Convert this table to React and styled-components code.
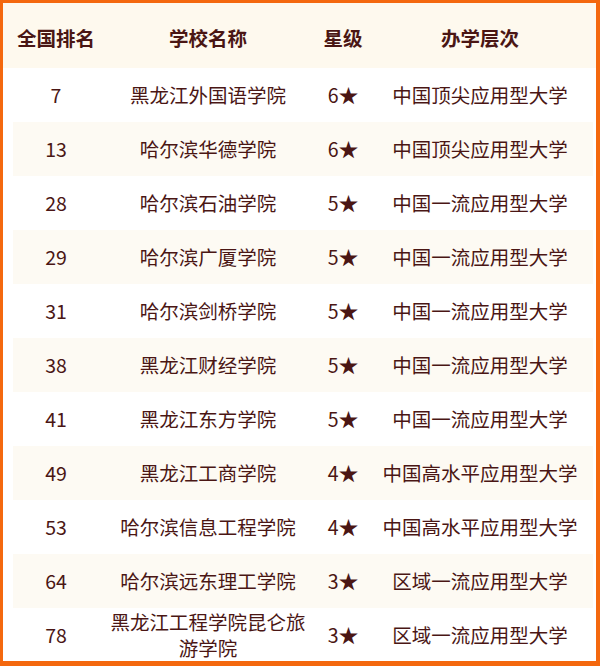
import styled, { createGlobalStyle } from 'styled-components';

const GlobalStyle = createGlobalStyle`
  html, body {
    margin: 0;
    padding: 0;
    background: #ffffff;
  }
`

const Frame = styled.div`
  box-sizing: border-box;
  width: 600px;
  height: 666px;
  border-style: solid;
  border-color: #f4680e;
  border-width: 3px 4px 5px 3px;
  background: #ffffff;
  font-family: "Noto Sans CJK SC", "Noto Sans", sans-serif;
  color: #4a1614;
  overflow: hidden;
`

const Grid = styled.div`
  display: grid;
  grid-template-columns: 106px 198px 72px 202px;
  align-items: center;
  justify-items: center;
  text-align: center;
`

const HeaderRow = styled(Grid)`
  height: 65px;
  background: #fef9ee;
  font-weight: 700;
  font-size: 19.5px;
  padding-top: 3px;
  box-sizing: border-box;
`

const Row = styled(Grid)`
  min-height: ${p => p.$last ? 53 : 54}px;
  font-size: 19.5px;
  line-height: 26px;
  background: ${p => p.$striped
    ? 'linear-gradient(to right, transparent 10px, #fdfaf3 10px, #fdfaf3 calc(100% - 3px), transparent calc(100% - 3px))'
    : 'transparent'};
`

const Cell = styled.div`
  width: 100%;
`

const rows = [
  [7, '黑龙江外国语学院', 6, '中国顶尖应用型大学'],
  [13, '哈尔滨华德学院', 6, '中国顶尖应用型大学'],
  [28, '哈尔滨石油学院', 5, '中国一流应用型大学'],
  [29, '哈尔滨广厦学院', 5, '中国一流应用型大学'],
  [31, '哈尔滨剑桥学院', 5, '中国一流应用型大学'],
  [38, '黑龙江财经学院', 5, '中国一流应用型大学'],
  [41, '黑龙江东方学院', 5, '中国一流应用型大学'],
  [49, '黑龙江工商学院', 4, '中国高水平应用型大学'],
  [53, '哈尔滨信息工程学院', 4, '中国高水平应用型大学'],
  [64, '哈尔滨远东理工学院', 3, '区域一流应用型大学'],
  [78, '黑龙江工程学院昆仑旅游学院', 3, '区域一流应用型大学'],
]

export default function App() {
  return (
    <>
      <GlobalStyle />
      <Frame>
        <HeaderRow>
          <Cell>全国排名</Cell>
          <Cell>学校名称</Cell>
          <Cell>星级</Cell>
          <Cell>办学层次</Cell>
        </HeaderRow>
        {rows.map((r, i) => (
          <Row key={r[0]} $striped={i % 2 === 1} $last={i === rows.length - 1}>
            <Cell>{r[0]}</Cell>
            <Cell>{r[1]}</Cell>
            <Cell>{r[2]}★</Cell>
            <Cell>{r[3]}</Cell>
          </Row>
        ))}
      </Frame>
    </>
  )
}
